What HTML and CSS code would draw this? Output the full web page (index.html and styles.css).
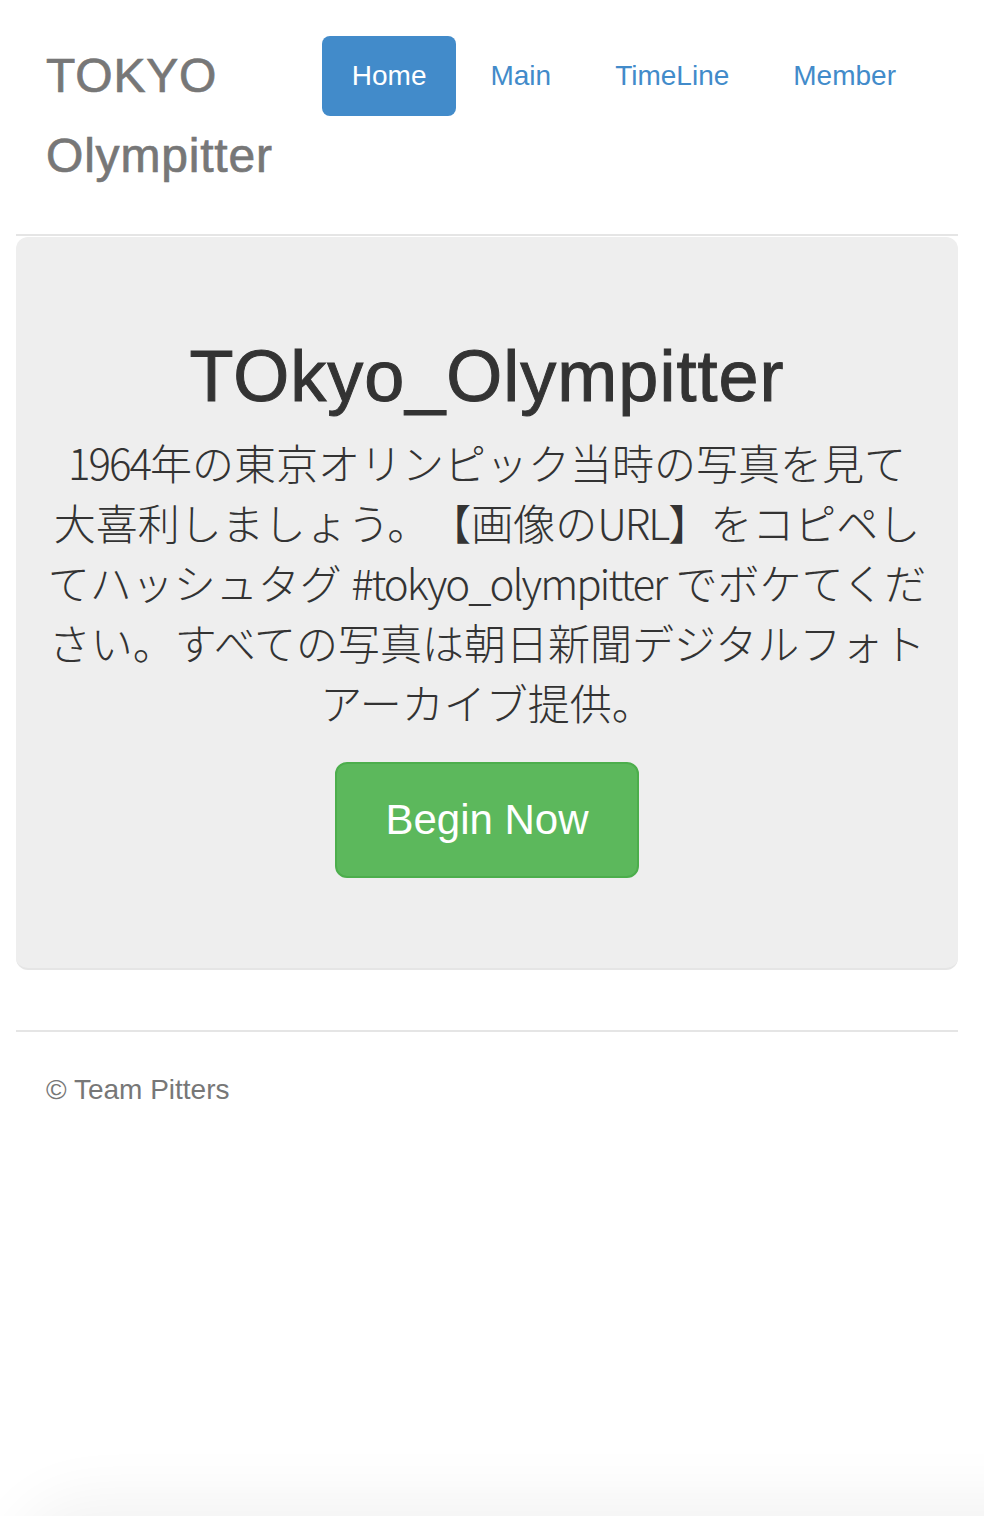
FILE: index.html
```html
<!DOCTYPE html>
<html lang="ja">
<head>
<meta charset="utf-8">
<title>TOKYO Olympitter</title>
<link rel="stylesheet" href="styles.css">
</head>
<body>
<div class="container">
  <header class="header">
    <h3 class="brand">TOKYO Olympitter</h3>
    <nav>
      <ul class="pills">
        <li><a class="pill active" href="#">Home</a></li>
        <li><a class="pill" href="#">Main</a></li>
        <li><a class="pill" href="#">TimeLine</a></li>
        <li><a class="pill" href="#">Member</a></li>
      </ul>
    </nav>
  </header>

  <section class="jumbotron">
    <h1 class="title">TOkyo_Olympitter</h1>
    <p class="lead"><span class="latin">1964</span>年の東京オリンピック当時の写真を見て<br>大喜利しましょう。【画像の<span class="latin">URL</span>】をコピペし<br>てハッシュタグ <span class="latin">#tokyo_olympitter</span> でボケてくだ<br>さい。すべての写真は朝日新聞デジタルフォト<br>アーカイブ提供。</p>
    <div class="cta"><a class="btn-begin" href="#">Begin Now</a></div>
  </section>

  <footer class="footer">
    <p>© Team Pitters</p>
  </footer>
</div>
<div class="bottom-shade"></div>
</body>
</html>
```

FILE: styles.css
```css
* { box-sizing: border-box; }

html, body {
  margin: 0;
  padding: 0;
  background: #fff;
}

body {
  font-family: "Liberation Sans", Arial, "Noto Sans CJK JP", sans-serif;
  color: #333;
  font-size: 28px;
  line-height: 40px;
  overflow: hidden;
}

.container {
  width: 942px;
  margin-left: 16px;
  padding-top: 36px;
}

.header {
  display: flex;
  align-items: flex-start;
  padding: 0 30px 38px;
  border-bottom: 2px solid #e5e5e5;
}

.brand {
  flex: 1 1 auto;
  min-width: 0;
  margin: 0;
  font-size: 48px;
  line-height: 80px;
  font-weight: 500;
  letter-spacing: 0.8px;
  -webkit-text-stroke: 0.7px #777;
  color: #777;
}

.pills {
  display: flex;
  list-style: none;
  margin: 0 2px 0 0;
  padding: 0;
  gap: 4px;
}

.pill {
  display: block;
  padding: 20px 30px;
  font-size: 28px;
  line-height: 40px;
  border-radius: 8px;
  color: #428bca;
  text-decoration: none;
  white-space: nowrap;
}

.pill.active {
  background: #428bca;
  color: #fff;
}

.jumbotron {
  margin-top: 1px;
  margin-bottom: 60px;
  padding: 60px 14px;
  background: #eee;
  border-radius: 12px;
  border-bottom: 2px solid #e5e5e5;
  text-align: center;
}

.title {
  margin: 40px 0 16px;
  font-size: 72px;
  line-height: 1.1;
  font-weight: 500;
  letter-spacing: 1px;
  -webkit-text-stroke: 1px #333;
  color: #333;
}

.lead {
  margin: 0 0 30px;
  font-family: "Noto Sans CJK JP", sans-serif;
  font-size: 42px;
  line-height: 60px;
  font-weight: 300;
  color: #333;
  text-spacing-trim: space-all;
  white-space: nowrap;
}

.lead .latin {
  letter-spacing: -2px;
}

.cta {
  display: flex;
  justify-content: center;
  margin-bottom: 30px;
}

.btn-begin {
  display: block;
  padding: 28px 48px;
  font-size: 42px;
  line-height: 56px;
  color: #fff;
  background: #5cb85c;
  border: 2px solid #4cae4c;
  border-radius: 12px;
  text-decoration: none;
  white-space: nowrap;
}

.footer {
  padding: 38px 30px 0;
  border-top: 2px solid #e5e5e5;
  color: #777;
}

.footer p {
  margin: 0 0 20px;
  font-size: 28px;
  line-height: 40px;
}

.bottom-shade {
  position: fixed;
  left: 30px;
  right: -200px;
  bottom: -300px;
  height: 300px;
  border-radius: 60px;
  background: #eee;
  box-shadow: 0 0 60px 20px rgba(0, 0, 0, 0.05);
}
```
